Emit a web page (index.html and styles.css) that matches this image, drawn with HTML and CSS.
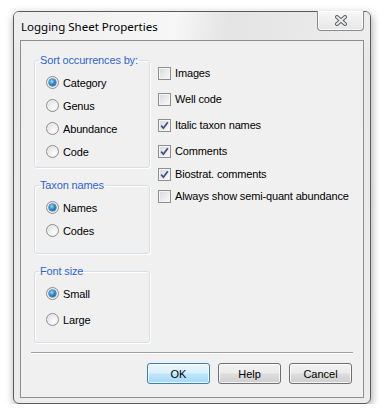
FILE: index.html
```html
<!DOCTYPE html>
<html lang="en">
<head>
  <meta charset="UTF-8" />
  <title>Logging Sheet Properties</title>
  <link rel="stylesheet" href="styles.css">
</head>
<body>
  <div class="window">
    <div class="titlebar">
      <span class="title">Logging Sheet Properties</span>
      <button class="close" aria-label="Close">
        <svg width="14" height="11" viewBox="0 0 14 11">
          <path d="M3 2 L11 9 M11 2 L3 9" stroke="#5f6368" stroke-width="4" stroke-linecap="round" fill="none"/>
          <path d="M3 2 L11 9 M11 2 L3 9" stroke="#e9e9e9" stroke-width="2" stroke-linecap="round" fill="none"/>
        </svg>
      </button>
    </div>

    <div class="client">
      <div class="content">
        <div class="groups">
          <fieldset class="group sort">
            <legend>Sort occurrences by:</legend>
            <div class="opt"><span class="radio on"></span>Category</div>
            <div class="opt"><span class="radio"></span>Genus</div>
            <div class="opt"><span class="radio"></span>Abundance</div>
            <div class="opt"><span class="radio"></span>Code</div>
          </fieldset>

          <fieldset class="group taxon">
            <legend>Taxon names</legend>
            <div class="opt"><span class="radio on"></span>Names</div>
            <div class="opt"><span class="radio"></span>Codes</div>
          </fieldset>

          <fieldset class="group fontsize">
            <legend>Font size</legend>
            <div class="opt"><span class="radio on"></span>Small</div>
            <div class="opt spaced"><span class="radio"></span>Large</div>
          </fieldset>
        </div>

        <div class="checks">
          <div class="check"><span class="box"></span>Images</div>
          <div class="check"><span class="box"></span>Well code</div>
          <div class="check"><span class="box on"><svg width="9" height="9" viewBox="0 0 9 9"><path d="M1.2 4.6 L3.4 7.2 L7.8 1.2" stroke="#3b4a8c" stroke-width="1.7" fill="none"/></svg></span>Italic taxon names</div>
          <div class="check tight"><span class="box on"><svg width="9" height="9" viewBox="0 0 9 9"><path d="M1.2 4.6 L3.4 7.2 L7.8 1.2" stroke="#3b4a8c" stroke-width="1.7" fill="none"/></svg></span>Comments</div>
          <div class="check flush"><span class="box on"><svg width="9" height="9" viewBox="0 0 9 9"><path d="M1.2 4.6 L3.4 7.2 L7.8 1.2" stroke="#3b4a8c" stroke-width="1.7" fill="none"/></svg></span>Biostrat. comments</div>
          <div class="check"><span class="box"></span>Always show semi-quant abundance</div>
        </div>
      </div>

      <div class="separator"></div>

      <div class="buttons">
        <button class="btn default">OK</button>
        <button class="btn">Help</button>
        <button class="btn">Cancel</button>
      </div>
    </div>
  </div>
</body>
</html>
```

FILE: styles.css
```css
body {
  margin: 0;
  background: #ffffff;
  font-family: "Liberation Sans", Arial, sans-serif;
  font-size: 11px;
  letter-spacing: -0.15px;
  color: #000;
}

.window {
  box-sizing: border-box;
  width: 358px;
  height: 393px;
  margin: 11px 0 0 13px;
  border: 1px solid #5b5b5b;
  border-radius: 6px;
  background: linear-gradient(#f6f6f6, #e9e9e9 40px, #ececec);
  box-shadow: 1px 3px 9px rgba(0, 0, 0, 0.35);
  display: flex;
  flex-direction: column;
}

.titlebar {
  height: 28px;
  display: flex;
  align-items: flex-start;
  justify-content: space-between;
  padding-left: 7px;
  padding-right: 6px;
  border-radius: 5px 5px 0 0;
  background: linear-gradient(100deg, #eeeeee 0%, #f7f7f7 45%, #e4e4e4 60%, #ededed 100%);
}

.title {
  font-family: "Noto Sans", "Open Sans", sans-serif;
  font-size: 11.5px;
  letter-spacing: 0;
  line-height: 16px;
  margin-top: 7px;
  color: #000;
}

.close {
  width: 47px;
  height: 20px;
  margin-top: -1px;
  padding: 0;
  border: 1px solid #8a8a8a;
  border-top: none;
  border-radius: 0 0 4px 4px;
  background: linear-gradient(#f8f8f8, #e6e6e6);
  box-shadow: inset 0 0 0 1px rgba(255, 255, 255, 0.8);
  display: flex;
  align-items: center;
  justify-content: center;
}

.client {
  flex: 1;
  margin: 0 6px 5px 6px;
  border: 1px solid #8e8f8f;
  background: #f0f0f0;
  display: flex;
  flex-direction: column;
}

.content {
  display: flex;
  gap: 8px;
  padding-left: 13px;
}

.groups {
  width: 116px;
  padding-top: 13px;
  display: flex;
  flex-direction: column;
  gap: 11px;
}

.group {
  margin: 0;
  padding: 4px 0 4px 4px;
  border: 1px solid #d5dfe5;
  border-radius: 3px;
  box-shadow: inset 1px 1px 0 #fff, 1px 1px 0 #fff;
  min-width: 0;
}

.group legend {
  padding: 0 1px;
  line-height: 13px;
  color: #2d62d4;
}

.group.taxon,
.group.fontsize {
  padding-bottom: 11px;
}

.opt {
  height: 23px;
  display: flex;
  align-items: center;
  gap: 4px;
  padding-left: 7px;
}

.opt.spaced {
  margin-top: 3px;
}

.radio {
  box-sizing: border-box;
  width: 13px;
  height: 13px;
  border-radius: 50%;
  border: 1px solid #8c8c8c;
  background: radial-gradient(circle at 65% 70%, #ffffff 0%, #eaeaea 55%, #c9c9c9 100%);
  box-shadow: inset 0 0 0 1px #f2f2f2;
  display: flex;
  align-items: center;
  justify-content: center;
  flex-shrink: 0;
}

.radio.on::before {
  content: "";
  width: 7px;
  height: 7px;
  border-radius: 50%;
  background: radial-gradient(circle at 40% 35%, #9be0f8 0%, #2b8bd0 45%, #0d4f8f 100%);
  box-shadow: 0 0 0 0.5px #16508a;
}

.checks {
  padding-top: 21px;
  display: flex;
  flex-direction: column;
}

.check {
  height: 22px;
  margin-bottom: 4px;
  display: flex;
  align-items: center;
  gap: 4px;
}

.check.tight {
  margin-bottom: 1px;
}

.check.flush {
  margin-bottom: 0;
}

.box {
  box-sizing: border-box;
  width: 13px;
  height: 13px;
  border: 1px solid #8e8f8f;
  background: linear-gradient(135deg, #d6d8db, #fbfbfb);
  box-shadow: inset 0 0 0 1px #f4f4f4;
  display: flex;
  align-items: center;
  justify-content: center;
  flex-shrink: 0;
}

.separator {
  margin: 9px 10px 0 10px;
  border-top: 1px solid #a0a0a0;
  border-bottom: 1px solid #ffffff;
}

.buttons {
  display: flex;
  justify-content: flex-end;
  gap: 8px;
  padding: 9px 11px 0 0;
}

.btn {
  box-sizing: border-box;
  width: 63px;
  height: 21px;
  padding: 0;
  border: 1px solid #707070;
  border-radius: 3px;
  font-family: "Liberation Sans", Arial, sans-serif;
  font-size: 11px;
  color: #000;
  background: linear-gradient(#f2f2f2 0%, #ebebeb 48%, #dddddd 52%, #cfcfcf 100%);
  box-shadow: inset 0 0 0 1px rgba(255, 255, 255, 0.75);
}

.btn.default {
  border-color: #3c7fb1;
  background: linear-gradient(#eaf6fd 0%, #d9f0fc 48%, #bee6fd 52%, #a7d9f5 100%);
}
```
